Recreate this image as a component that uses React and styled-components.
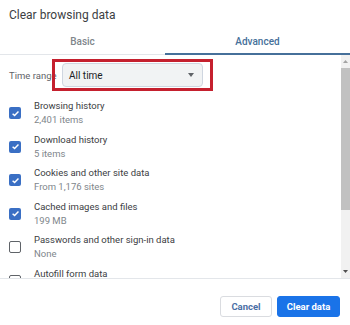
import React from 'react';
import styled, { createGlobalStyle } from 'styled-components';

const GlobalStyle = createGlobalStyle`
  html, body {
    margin: 0;
    padding: 0;
    background: #fff;
  }
  body {
    font-family: Roboto, 'Liberation Sans', Arial, sans-serif;
  }
`;

const Dialog = styled.div`
  width: 350px;
  height: 325px;
  display: flex;
  flex-direction: column;
  background: #fff;
  overflow: hidden;
`;

const Title = styled.div`
  height: 30px;
  padding-left: 9px;
  display: flex;
  align-items: center;
  font-size: 12px;
  color: #3c4043;
`;

const Tabs = styled.div`
  display: flex;
  height: 24px;
  border-bottom: 1px solid #e3e6ea;
`;

const Tab = styled.div`
  width: ${(p) => (p.wide ? 'auto' : '165px')};
  flex: ${(p) => (p.wide ? 1 : 'none')};
  display: flex;
  align-items: center;
  justify-content: center;
  font-size: 10px;
  font-weight: 500;
  color: ${(p) => (p.active ? '#46709a' : '#80868b')};
  border-bottom: 2px solid ${(p) => (p.active ? '#46709a' : 'transparent')};
  margin-bottom: -1px;
`;

const Body = styled.div`
  height: 223px;
  display: flex;
  border-bottom: 1px solid #e3e6ea;
`;

const Content = styled.div`
  flex: 1;
  overflow: hidden;
  padding: 8px 0 0 9px;
`;

const RangeRow = styled.div`
  position: relative;
  display: flex;
  align-items: center;
  height: 24px;
  gap: 6px;
`;

const Label = styled.span`
  font-size: 9.5px;
  color: #5f6368;
  width: 47px;
  white-space: nowrap;
`;

const Select = styled.div`
  width: 141px;
  height: 24px;
  box-sizing: border-box;
  border: 1px solid #cfd6e0;
  border-radius: 4px;
  background: #f1f3f4;
  display: flex;
  align-items: center;
  justify-content: space-between;
  padding: 0 8px 0 6px;
  font-size: 10px;
  color: #202124;
`;

const Caret = styled.span`
  width: 0;
  height: 0;
  border-left: 3.5px solid transparent;
  border-right: 3.5px solid transparent;
  border-top: 4px solid #5f6368;
`;

const Highlight = styled.div`
  position: absolute;
  left: 43px;
  top: -4px;
  width: 161px;
  height: 32px;
  box-sizing: border-box;
  border: 3px solid #c5202e;
  pointer-events: none;
`;

const List = styled.div`
  display: flex;
  flex-direction: column;
  gap: 5.5px;
  margin-top: 12px;
`;

const Item = styled.div`
  display: flex;
  align-items: center;
  height: 28px;
  flex: none;
`;

const Box = styled.span`
  width: 12px;
  height: 12px;
  box-sizing: border-box;
  border-radius: 2px;
  border: ${(p) => (p.checked ? 'none' : '1.5px solid #5f6368')};
  background: ${(p) => (p.checked ? '#3a6fc4' : '#fff')};
  display: flex;
  align-items: center;
  justify-content: center;
  margin-right: 13px;
  flex: none;
`;

const Texts = styled.div`
  display: flex;
  flex-direction: column;
`;

const ItemTitle = styled.span`
  font-size: 9.5px;
  line-height: 14px;
  color: #3c4043;
`;

const ItemSub = styled.span`
  font-size: 9.5px;
  line-height: 14px;
  min-height: 14px;
  color: #80868b;
`;

const Scrollbar = styled.div`
  width: 9px;
  display: flex;
  flex-direction: column;
  align-items: stretch;
  background: #f1f1f1;
`;

const Arrow = styled.div`
  height: 13px;
  display: flex;
  align-items: center;
  justify-content: center;
`;

const Thumb = styled.div`
  height: 142px;
  background: #c1c1c1;
`;

const Track = styled.div`
  flex: 1;
`;

const Footer = styled.div`
  flex: 1;
  display: flex;
  justify-content: flex-end;
  align-items: flex-start;
  padding: 17px 10px 0 0;
  gap: 5px;
`;

const Button = styled.button`
  height: 21px;
  box-sizing: border-box;
  border-radius: 3px;
  font-family: inherit;
  font-size: 9.5px;
  font-weight: 700;
  padding: 0;
  width: ${(p) => (p.primary ? '63px' : '52px')};
  border: 1px solid ${(p) => (p.primary ? '#1a73e8' : '#dadce0')};
  background: ${(p) => (p.primary ? '#1a73e8' : '#fff')};
  color: ${(p) => (p.primary ? '#fff' : '#4a6fa5')};
`;

const items = [
  { title: 'Browsing history', sub: '2,401 items', checked: true },
  { title: 'Download history', sub: '5 items', checked: true },
  { title: 'Cookies and other site data', sub: 'From 1,176 sites', checked: true },
  { title: 'Cached images and files', sub: '199 MB', checked: true },
  { title: 'Passwords and other sign-in data', sub: 'None', checked: false },
  { title: 'Autofill form data', sub: '', checked: false },
];

const Check = () => (
  <svg width="9" height="9" viewBox="0 0 10 10">
    <polyline points="1.8,5.2 4,7.3 8.3,2.8" fill="none" stroke="#fff" strokeWidth="1.6" />
  </svg>
);

export default function App() {
  return (
    <Dialog>
      <GlobalStyle />
      <Title>Clear browsing data</Title>
      <Tabs>
        <Tab>Basic</Tab>
        <Tab wide active>Advanced</Tab>
      </Tabs>
      <Body>
        <Content>
          <RangeRow>
            <Label>Time range</Label>
            <Select>
              All time
              <Caret />
            </Select>
            <Highlight />
          </RangeRow>
          <List>
            {items.map((it) => (
              <Item key={it.title}>
                <Box checked={it.checked}>{it.checked && <Check />}</Box>
                <Texts>
                  <ItemTitle>{it.title}</ItemTitle>
                  <ItemSub>{it.sub}</ItemSub>
                </Texts>
              </Item>
            ))}
          </List>
        </Content>
        <Scrollbar>
          <Arrow>
            <svg width="5" height="3" viewBox="0 0 5 3"><polygon points="0,3 5,3 2.5,0" fill="#a3a3a3" /></svg>
          </Arrow>
          <Thumb />
          <Track />
          <Arrow>
            <svg width="5" height="3" viewBox="0 0 5 3"><polygon points="0,0 5,0 2.5,3" fill="#505050" /></svg>
          </Arrow>
        </Scrollbar>
      </Body>
      <Footer>
        <Button>Cancel</Button>
        <Button primary>Clear data</Button>
      </Footer>
    </Dialog>
  );
}
